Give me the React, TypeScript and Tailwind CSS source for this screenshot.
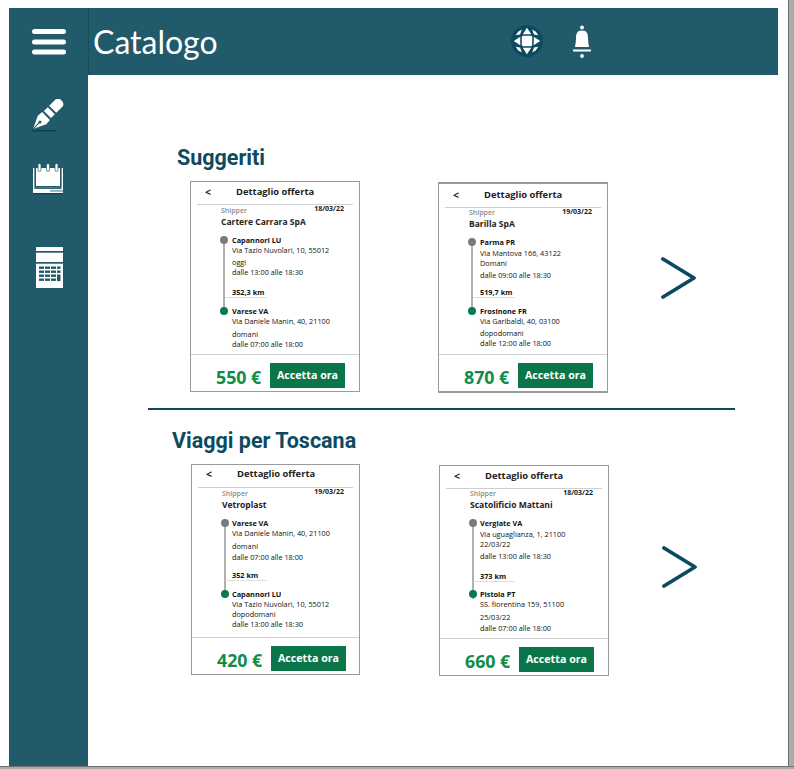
import React from "react";

type CardData = {
  cardCls: string;
  titleCls: string;
  ruleCls: string;
  shipperCls: string;
  companyCls: string;
  routeCls: string;
  bullet2Cls: string;
  date: string;
  company: string;
  name1: string;
  addr1: string;
  day1: string;
  time1: string;
  km: string;
  name2: string;
  addr2: string;
  day2: string;
  time2: string;
  day1Cls: string;
  time1Cls: string;
  kmCls: string;
  name2Cls: string;
  day2Cls: string;
  time2Cls: string;
  addr1Cls: string;
  price: string;
};

const Line = ({ cls, children }: { cls?: string; children: React.ReactNode }) => (
  <div className={`h-[10px] whitespace-nowrap text-[7.3px] leading-[10px] text-[#111] ${cls ?? ""}`}>{children}</div>
);

function Card({ d }: { d: CardData }) {
  return (
    <div className={`relative flex h-[211px] shrink-0 flex-col border border-[#9a9a9a] bg-white font-['Open_Sans',sans-serif] ${d.cardCls}`}>
      <div className={`relative flex h-[16px] items-center ${d.titleCls}`}>
        <span className="ml-[14px] text-[10.5px] font-bold leading-none text-[#222]">&lt;</span>
        <span className="ml-[25px] whitespace-nowrap text-[9.4px] font-bold leading-none text-[#222]">Dettaglio offerta</span>
      </div>
      <div className={`mx-[6px] h-px bg-[#cfcfcf] ${d.ruleCls}`} />
      <div className="relative pl-[30px]">
        <div className={`h-[8px] text-[7px] font-semibold leading-[8px] text-[#8a8a8a] ${d.shipperCls}`}>Shipper</div>
        <div className="absolute right-[15px] top-0 text-[7px] font-bold leading-[8px] text-[#222]">{d.date}</div>
        <div className={`h-[11px] whitespace-nowrap text-[8.5px] font-bold leading-[11px] text-[#222] ${d.companyCls}`}>{d.company}</div>
      </div>
      <div className={`relative mt-[8px] ${d.routeCls}`}>
        <div className="absolute bottom-[34px] left-[32px] top-[4px] w-[2px] bg-[#b0b0b0]" />
        <div className="absolute left-[29px] top-[1px] size-[8px] rounded-full bg-[#7b7b7b]" />
        <Line cls="font-bold">{d.name1}</Line>
        <Line cls={d.addr1Cls}>{d.addr1}</Line>
        <Line cls={d.day1Cls}>{d.day1}</Line>
        <Line cls={d.time1Cls}>{d.time1}</Line>
        <div className={`relative ${d.kmCls}`}>
          <Line cls="font-bold">{d.km}</Line>
          <div className="absolute left-[-7px] top-[10px] h-px w-[42px] bg-[#dddddd]" />
        </div>
        <div className={`relative ${d.name2Cls}`}>
          <div className={`absolute top-[1px] size-[8px] rounded-full bg-[#0a7a4e] ${d.bullet2Cls}`} />
          <Line cls="font-bold">{d.name2}</Line>
        </div>
        <Line>{d.addr2}</Line>
        <Line cls={d.day2Cls}>{d.day2}</Line>
        <Line cls={d.time2Cls}>{d.time2}</Line>
      </div>
      <div className="mt-auto flex h-[37px] items-start border-t border-[#cfcfcf] pl-[25px] pt-[8px]">
        <span className="w-[54px] whitespace-nowrap pt-[4px] text-[17.8px] font-bold leading-[20px] text-[#118c49]">{d.price}</span>
        <span className="flex h-[25px] w-[75px] items-center justify-center bg-[#0a7548] text-[10.7px] font-bold text-white">Accetta ora</span>
      </div>
    </div>
  );
}

const cards: CardData[] = [
  {
    cardCls: "w-[170px]",
    titleCls: "mt-[2px]",
    ruleCls: "mt-[4px]",
    shipperCls: "mt-[2px]",
    companyCls: "mt-[1px]",
    routeCls: "pl-[41px]",
    bullet2Cls: "left-[-12px]",
    date: "18/03/22",
    company: "Cartere Carrara SpA",
    name1: "Capannori LU",
    addr1: "Via Tazio Nuvolari, 10, 55012",
    addr1Cls: "",
    day1: "oggi",
    day1Cls: "mt-[2px]",
    time1: "dalle 13:00 alle 18:30",
    time1Cls: "",
    km: "352,3 km",
    kmCls: "mt-[10px]",
    name2: "Varese VA",
    name2Cls: "mt-[9px]",
    addr2: "Via Daniele Manin, 40, 21100",
    day2: "domani",
    day2Cls: "mt-[3px]",
    time2: "dalle 07:00 alle 18:00",
    time2Cls: "",
    price: "550 €",
  },
  {
    cardCls: "w-[170px] border-t-2 border-b-2",
    titleCls: "mt-[3px]",
    ruleCls: "mt-[4px]",
    shipperCls: "mt-[1px]",
    companyCls: "mt-[1px]",
    routeCls: "pl-[41px]",
    bullet2Cls: "left-[-12px]",
    date: "19/03/22",
    company: "Barilla SpA",
    name1: "Parma PR",
    addr1: "Via Mantova 166, 43122",
    addr1Cls: "mt-px",
    day1: "Domani",
    day1Cls: "",
    time1: "dalle 09:00 alle 18:30",
    time1Cls: "mt-[2px]",
    km: "519,7 km",
    kmCls: "mt-[7px]",
    name2: "Frosinone FR",
    name2Cls: "mt-[9px]",
    addr2: "Via Garibaldi, 40, 03100",
    day2: "dopodomani",
    day2Cls: "mt-[2px]",
    time2: "dalle 12:00 alle 18:00",
    time2Cls: "",
    price: "870 €",
  },
  {
    cardCls: "w-[169px]",
    titleCls: "mt-px",
    ruleCls: "mt-[5px]",
    shipperCls: "mt-[2px]",
    companyCls: "mt-px",
    routeCls: "pl-[40px]",
    bullet2Cls: "left-[-11px]",
    date: "19/03/22",
    company: "Vetroplast",
    name1: "Varese VA",
    addr1: "Via Daniele Manin, 40, 21100",
    addr1Cls: "",
    day1: "domani",
    day1Cls: "mt-[3px]",
    time1: "dalle 07:00 alle 18:00",
    time1Cls: "mt-px",
    km: "352 km",
    kmCls: "mt-[8px]",
    name2: "Capannori LU",
    name2Cls: "mt-[9px]",
    addr2: "Via Tazio Nuvolari, 10, 55012",
    day2: "dopodomani",
    day2Cls: "",
    time2: "dalle 13:00 alle 18:30",
    time2Cls: "",
    price: "420 €",
  },
  {
    cardCls: "w-[170px]",
    titleCls: "mt-[2px]",
    ruleCls: "mt-[4px]",
    shipperCls: "mt-[1px]",
    companyCls: "mt-[1px]",
    routeCls: "pl-[40px]",
    bullet2Cls: "left-[-11px]",
    date: "18/03/22",
    company: "Scatolificio Mattani",
    name1: "Vergiate VA",
    addr1: "Via uguaglianza, 1, 21100",
    addr1Cls: "mt-px",
    day1: "22/03/22",
    day1Cls: "",
    time1: "dalle 13:00 alle 18:30",
    time1Cls: "mt-[2px]",
    km: "373 km",
    kmCls: "mt-[10px]",
    name2: "Pistoia PT",
    name2Cls: "mt-[8px]",
    addr2: "SS. fiorentina 159, 51100",
    day2: "25/03/22",
    day2Cls: "mt-[3px]",
    time2: "dalle 07:00 alle 18:00",
    time2Cls: "mt-px",
    price: "660 €",
  },
];

const Chevron = ({ cls }: { cls: string }) => (
  <svg className={`shrink-0 ${cls}`} width="36" height="42" viewBox="0 0 36 42" fill="none">
    <path d="M2 2 L33 21 L2 40" stroke="#0e4a5f" strokeWidth="3.8" strokeLinecap="round" strokeLinejoin="round" />
  </svg>
);

const Hamburger = () => (
  <svg width="36" height="28" viewBox="0 0 36 28" fill="#fff">
    <rect x="1" y="1" width="34" height="5" rx="2.5" />
    <rect x="1" y="11.5" width="34" height="5" rx="2.5" />
    <rect x="1" y="21.5" width="34" height="5" rx="2.5" />
  </svg>
);

const Pen = () => (
  <svg width="34" height="34" viewBox="0 0 34 34">
    <g transform="translate(29.5 2.5) rotate(45)" fill="#fff">
      <path d="M-5 11 V2 A5 3.5 0 0 1 5 2 V11 Z" />
      <rect x="-5" y="13" width="10" height="5.5" />
      <path d="M-5.5 20.5 H5.5 L6 26 L0 39 L-6 26 Z" />
      <path d="M0 30 V39" stroke="#205a6b" strokeWidth="1.1" />
      <circle cx="0" cy="29" r="1.5" fill="#205a6b" />
    </g>
    <rect x="1" y="31" width="24" height="1.3" fill="#123f4f" />
  </svg>
);

const Notebook = () => (
  <svg width="34" height="32" viewBox="0 0 34 32">
    <path d="M2 5 H32 V31 H2 Z" fill="#fff" />
    <rect x="3.4" y="5" width="27.2" height="19.6" fill="#205a6b" />
    <rect x="5" y="8" width="24" height="15" fill="#fff" />
    <rect x="5" y="5" width="24" height="3" fill="#fff" />
    <rect x="3.4" y="24.6" width="27.2" height="1.2" fill="#123f4f" />
    <rect x="2" y="26.8" width="17" height="2" fill="#fff" />
    <rect x="19" y="26.8" width="13" height="2" fill="#8fb2ba" />
    <rect x="2" y="30" width="30" height="1.3" fill="#123f4f" />
    <rect x="0" y="0" width="34" height="5" fill="#205a6b" />
    {[7, 15.5, 24].map((x) => (
      <rect key={x} x={x} y="0.5" width="3" height="8" rx="1.5" fill="#fff" stroke="#205a6b" strokeWidth="0.7" />
    ))}
  </svg>
);

const Calculator = () => (
  <svg width="27" height="41" viewBox="0 0 27 41">
    <rect x="0" y="0" width="27" height="41" fill="#fff" />
    <rect x="0" y="4" width="27" height="1.7" fill="#205a6b" />
    <rect x="0" y="15" width="27" height="1.7" fill="#205a6b" />
    <g fill="#205a6b">
      {[19.5, 23.5, 27.5, 31.5].map((y) =>
        [3, 9, 15].map((x) => <rect key={`${x}-${y}`} x={x} y={y} width="5" height="2.4" />)
      )}
      {[19.5, 23.5].map((y) => (
        <rect key={y} x="21" y={y} width="3.5" height="2.4" />
      ))}
      <rect x="21" y="27.5" width="3.5" height="6.6" />
    </g>
  </svg>
);

const Globe = () => (
  <svg width="32" height="32" viewBox="0 0 34 34">
    <circle cx="17" cy="17" r="17" fill="#0e4a5f" />
    <g fill="#fff">
      <rect x="11.5" y="11.5" width="11" height="11" rx="1.5" />
      <path d="M17 3 L21.5 9.8 H12.5 Z" />
      <path d="M17 31 L21.5 24.2 H12.5 Z" />
      <path d="M3 17 L9.8 12.5 V21.5 Z" />
      <path d="M31 17 L24.2 12.5 V21.5 Z" />
      <path d="M11.5 4.8 L7.6 7.2 L5 11 L9.6 10.2 Z" />
      <path d="M22.5 4.8 L26.4 7.2 L29 11 L24.4 10.2 Z" />
      <path d="M11.5 29.2 L7.6 26.8 L5 23 L9.6 23.8 Z" />
      <path d="M22.5 29.2 L26.4 26.8 L29 23 L24.4 23.8 Z" />
    </g>
  </svg>
);

const Bell = () => (
  <svg width="20" height="34" viewBox="0 0 20 34" fill="#fff">
    <circle cx="10" cy="2.5" r="1.9" />
    <path d="M10 5.5 C5 5.5 4 9 4 13 C4 16 3.6 19 3 22 H17 C16.4 19 16 16 16 13 C16 9 15 5.5 10 5.5 Z" />
    <rect x="1" y="24.5" width="18" height="2" />
    <circle cx="10" cy="31" r="1.9" />
  </svg>
);

export default function App() {
  return (
    <div className="flex h-[769px] w-[794px] flex-col overflow-hidden bg-white">
      <div className="flex min-h-0 flex-1">
        <div className="flex flex-1 flex-col pl-[9px] pr-[10px] pt-[8px]">
          <div className="flex min-h-0 flex-1">
            <aside className="flex w-[79px] shrink-0 flex-col items-center bg-[#205a6b]">
              <div className="mt-[20px] pl-px"><Hamburger /></div>
              <div className="mt-[43px] pr-[2px]"><Pen /></div>
              <div className="mt-[30px] pr-[1px]"><Notebook /></div>
              <div className="mt-[52px] pl-px"><Calculator /></div>
            </aside>
            <div className="flex min-w-0 flex-1 flex-col">
              <header className="flex h-[67px] shrink-0 items-center border-l border-[#1a4c5c] bg-[#205a6b]">
                <h1 className="ml-[4px] w-[130px] font-['Lato',sans-serif] text-[32px] font-normal leading-none text-white">Catalogo</h1>
                <div className="ml-[288px] mb-[2px]"><Globe /></div>
                <div className="ml-[29px] pt-px"><Bell /></div>
              </header>
              <main className="flex-1 pr-[43px] pt-[69px]">
                <h2 className="ml-[89px] h-[28px] font-['Roboto',sans-serif] text-[21.5px] font-bold leading-[28px] text-[#0e4a5f]">Suggeriti</h2>
                <div className="ml-[102px] mt-[9px] flex items-start">
                  <Card d={cards[0]} />
                  <div className="ml-[78px] mt-px"><Card d={cards[1]} /></div>
                  <Chevron cls="ml-[53px] mt-[76px]" />
                </div>
                <div className="ml-[60px] mt-[15px] h-[2px] bg-[#0e4a5f]" />
                <h2 className="ml-[84px] mt-[17px] h-[28px] font-['Roboto',sans-serif] text-[21.5px] font-bold leading-[28px] text-[#0e4a5f]">Viaggi per Toscana</h2>
                <div className="ml-[103px] mt-[9px] flex items-start">
                  <Card d={cards[2]} />
                  <div className="ml-[79px] mt-px"><Card d={cards[3]} /></div>
                  <Chevron cls="ml-[53px] mt-[82px]" />
                </div>
              </main>
            </div>
          </div>
        </div>
        <div className="w-[6px] shrink-0 border-l border-[#6e6e6e] bg-[#ababab]" />
      </div>
      <div className="h-[3px] shrink-0 border-t border-[#6e6e6e] bg-[#ababab]" />
    </div>
  );
}
